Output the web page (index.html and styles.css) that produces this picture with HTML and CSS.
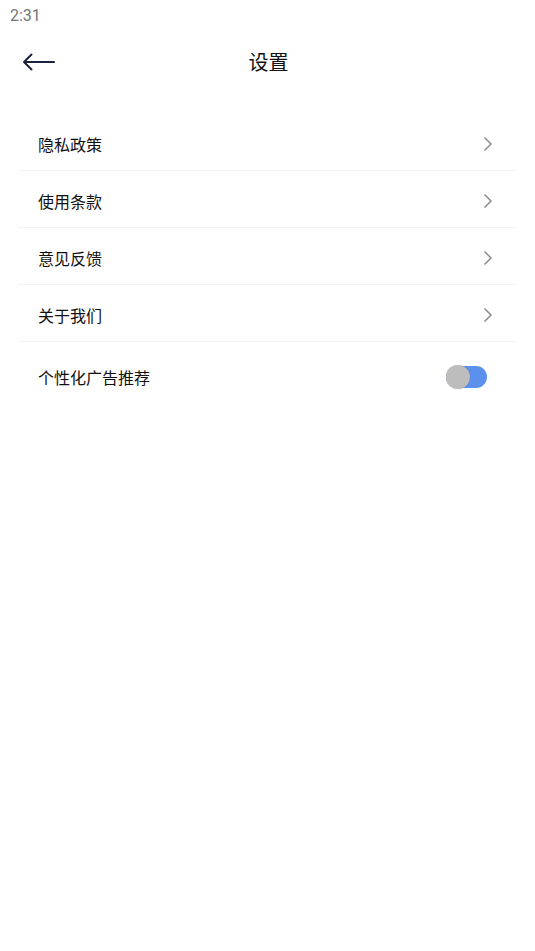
FILE: index.html
```html
<!DOCTYPE html>
<html>
  <head>
    <meta charset="utf-8">
    <title>设置</title>
    <link rel="stylesheet" href="styles.css">
  </head>
  <body>
    <div class="status_bar">2:31</div>

    <div class="nav_bar">
      <span class="back">
        <svg width="34" height="18" viewBox="0 0 34 18">
          <path d="M32 9 H2 M9.5 1.5 L2 9 L9.5 16.5" fill="none" stroke="#1b2140" stroke-width="2" stroke-linecap="round" stroke-linejoin="round"/>
        </svg>
      </span>
      <span class="title">设置</span>
    </div>

    <ul class="menu">
      <li class="item">
        <span>隐私政策</span>
        <svg class="chevron" width="10" height="16" viewBox="0 0 10 16"><path d="M1.5 1.5 L8 8 L1.5 14.5" fill="none" stroke="#8d8d8d" stroke-width="1.5"/></svg>
      </li>
      <li class="item">
        <span>使用条款</span>
        <svg class="chevron" width="10" height="16" viewBox="0 0 10 16"><path d="M1.5 1.5 L8 8 L1.5 14.5" fill="none" stroke="#8d8d8d" stroke-width="1.5"/></svg>
      </li>
      <li class="item">
        <span>意见反馈</span>
        <svg class="chevron" width="10" height="16" viewBox="0 0 10 16"><path d="M1.5 1.5 L8 8 L1.5 14.5" fill="none" stroke="#8d8d8d" stroke-width="1.5"/></svg>
      </li>
      <li class="item">
        <span>关于我们</span>
        <svg class="chevron" width="10" height="16" viewBox="0 0 10 16"><path d="M1.5 1.5 L8 8 L1.5 14.5" fill="none" stroke="#8d8d8d" stroke-width="1.5"/></svg>
      </li>
      <li class="item last">
        <span>个性化广告推荐</span>
        <span class="switch"><span class="knob"></span></span>
      </li>
    </ul>
  </body>
</html>
```

FILE: styles.css
```css
body {
    margin: 0;
    background: #fff;
    font-family: "Noto Sans CJK SC", "Roboto", sans-serif;
    color: #111;
}

.status_bar {
    height: 30px;
    padding-left: 10px;
    font-family: Roboto, sans-serif;
    font-size: 16px;
    line-height: 31px;
    color: #757575;
}

.nav_bar {
    display: flex;
    align-items: center;
    justify-content: center;
    height: 64px;
    position: relative;
}
.nav_bar .back {
    position: absolute;
    left: 22px;
    top: 22px;
    height: 18px;
}
.nav_bar .title {
    font-size: 20px;
    margin-left: 2px;
    margin-bottom: 2px;
}

.menu {
    margin: 20px 19px 0 18px;
    padding: 0;
    list-style: none;
}
.menu .item {
    display: flex;
    align-items: center;
    justify-content: space-between;
    height: 53px;
    padding: 3px 23px 0 20px;
    border-bottom: 1px solid #f3f3f3;
    font-size: 16px;
}
.menu .item.last {
    border-bottom: 0;
    height: 69px;
    padding-top: 0;
    padding-right: 29px;
}
.chevron {
    display: block;
}

.switch {
    position: relative;
    display: block;
    width: 41px;
    height: 22px;
    border-radius: 11px;
    background: #5b90ec;
}
.switch .knob {
    position: absolute;
    left: 0;
    top: -1px;
    width: 24px;
    height: 24px;
    border-radius: 50%;
    background: #bdbdbd;
    box-shadow: 0 0 1px rgba(0,0,0,0.25);
}
```
